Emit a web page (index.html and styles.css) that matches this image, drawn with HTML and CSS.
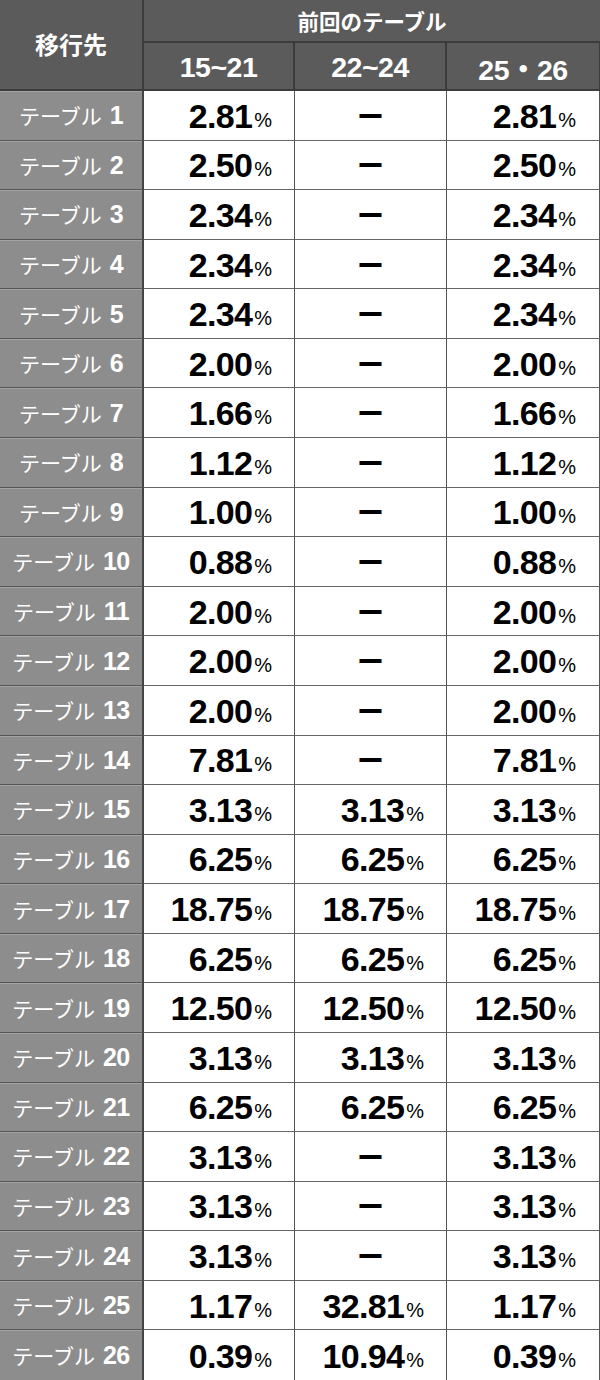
FILE: index.html
```html
<!DOCTYPE html>
<html lang="ja">
<head>
<meta charset="utf-8">
<title>移行先テーブル</title>
<link rel="stylesheet" href="styles.css">
</head>
<body>
<div class="table">
  <div class="hd hd-main">移行先</div>
  <div class="hd hd-group">前回のテーブル</div>
  <div class="hd hd-sub">15~21</div>
  <div class="hd hd-sub">22~24</div>
  <div class="hd hd-sub last">25・26</div>

  <div class="label"><span class="kana">テーブル</span><span class="num">1</span></div>
  <div class="cell c1"><span class="val">2.81</span><span class="pct">%</span></div>
  <div class="cell c2 dash"><span class="bar">ー</span></div>
  <div class="cell c3"><span class="val">2.81</span><span class="pct">%</span></div>

  <div class="label"><span class="kana">テーブル</span><span class="num">2</span></div>
  <div class="cell c1"><span class="val">2.50</span><span class="pct">%</span></div>
  <div class="cell c2 dash"><span class="bar">ー</span></div>
  <div class="cell c3"><span class="val">2.50</span><span class="pct">%</span></div>

  <div class="label"><span class="kana">テーブル</span><span class="num">3</span></div>
  <div class="cell c1"><span class="val">2.34</span><span class="pct">%</span></div>
  <div class="cell c2 dash"><span class="bar">ー</span></div>
  <div class="cell c3"><span class="val">2.34</span><span class="pct">%</span></div>

  <div class="label"><span class="kana">テーブル</span><span class="num">4</span></div>
  <div class="cell c1"><span class="val">2.34</span><span class="pct">%</span></div>
  <div class="cell c2 dash"><span class="bar">ー</span></div>
  <div class="cell c3"><span class="val">2.34</span><span class="pct">%</span></div>

  <div class="label"><span class="kana">テーブル</span><span class="num">5</span></div>
  <div class="cell c1"><span class="val">2.34</span><span class="pct">%</span></div>
  <div class="cell c2 dash"><span class="bar">ー</span></div>
  <div class="cell c3"><span class="val">2.34</span><span class="pct">%</span></div>

  <div class="label"><span class="kana">テーブル</span><span class="num">6</span></div>
  <div class="cell c1"><span class="val">2.00</span><span class="pct">%</span></div>
  <div class="cell c2 dash"><span class="bar">ー</span></div>
  <div class="cell c3"><span class="val">2.00</span><span class="pct">%</span></div>

  <div class="label"><span class="kana">テーブル</span><span class="num">7</span></div>
  <div class="cell c1"><span class="val">1.66</span><span class="pct">%</span></div>
  <div class="cell c2 dash"><span class="bar">ー</span></div>
  <div class="cell c3"><span class="val">1.66</span><span class="pct">%</span></div>

  <div class="label"><span class="kana">テーブル</span><span class="num">8</span></div>
  <div class="cell c1"><span class="val">1.12</span><span class="pct">%</span></div>
  <div class="cell c2 dash"><span class="bar">ー</span></div>
  <div class="cell c3"><span class="val">1.12</span><span class="pct">%</span></div>

  <div class="label"><span class="kana">テーブル</span><span class="num">9</span></div>
  <div class="cell c1"><span class="val">1.00</span><span class="pct">%</span></div>
  <div class="cell c2 dash"><span class="bar">ー</span></div>
  <div class="cell c3"><span class="val">1.00</span><span class="pct">%</span></div>

  <div class="label"><span class="kana">テーブル</span><span class="num">10</span></div>
  <div class="cell c1"><span class="val">0.88</span><span class="pct">%</span></div>
  <div class="cell c2 dash"><span class="bar">ー</span></div>
  <div class="cell c3"><span class="val">0.88</span><span class="pct">%</span></div>

  <div class="label"><span class="kana">テーブル</span><span class="num">11</span></div>
  <div class="cell c1"><span class="val">2.00</span><span class="pct">%</span></div>
  <div class="cell c2 dash"><span class="bar">ー</span></div>
  <div class="cell c3"><span class="val">2.00</span><span class="pct">%</span></div>

  <div class="label"><span class="kana">テーブル</span><span class="num">12</span></div>
  <div class="cell c1"><span class="val">2.00</span><span class="pct">%</span></div>
  <div class="cell c2 dash"><span class="bar">ー</span></div>
  <div class="cell c3"><span class="val">2.00</span><span class="pct">%</span></div>

  <div class="label"><span class="kana">テーブル</span><span class="num">13</span></div>
  <div class="cell c1"><span class="val">2.00</span><span class="pct">%</span></div>
  <div class="cell c2 dash"><span class="bar">ー</span></div>
  <div class="cell c3"><span class="val">2.00</span><span class="pct">%</span></div>

  <div class="label"><span class="kana">テーブル</span><span class="num">14</span></div>
  <div class="cell c1"><span class="val">7.81</span><span class="pct">%</span></div>
  <div class="cell c2 dash"><span class="bar">ー</span></div>
  <div class="cell c3"><span class="val">7.81</span><span class="pct">%</span></div>

  <div class="label"><span class="kana">テーブル</span><span class="num">15</span></div>
  <div class="cell c1"><span class="val">3.13</span><span class="pct">%</span></div>
  <div class="cell c2"><span class="val">3.13</span><span class="pct">%</span></div>
  <div class="cell c3"><span class="val">3.13</span><span class="pct">%</span></div>

  <div class="label"><span class="kana">テーブル</span><span class="num">16</span></div>
  <div class="cell c1"><span class="val">6.25</span><span class="pct">%</span></div>
  <div class="cell c2"><span class="val">6.25</span><span class="pct">%</span></div>
  <div class="cell c3"><span class="val">6.25</span><span class="pct">%</span></div>

  <div class="label"><span class="kana">テーブル</span><span class="num">17</span></div>
  <div class="cell c1"><span class="val">18.75</span><span class="pct">%</span></div>
  <div class="cell c2"><span class="val">18.75</span><span class="pct">%</span></div>
  <div class="cell c3"><span class="val">18.75</span><span class="pct">%</span></div>

  <div class="label"><span class="kana">テーブル</span><span class="num">18</span></div>
  <div class="cell c1"><span class="val">6.25</span><span class="pct">%</span></div>
  <div class="cell c2"><span class="val">6.25</span><span class="pct">%</span></div>
  <div class="cell c3"><span class="val">6.25</span><span class="pct">%</span></div>

  <div class="label"><span class="kana">テーブル</span><span class="num">19</span></div>
  <div class="cell c1"><span class="val">12.50</span><span class="pct">%</span></div>
  <div class="cell c2"><span class="val">12.50</span><span class="pct">%</span></div>
  <div class="cell c3"><span class="val">12.50</span><span class="pct">%</span></div>

  <div class="label"><span class="kana">テーブル</span><span class="num">20</span></div>
  <div class="cell c1"><span class="val">3.13</span><span class="pct">%</span></div>
  <div class="cell c2"><span class="val">3.13</span><span class="pct">%</span></div>
  <div class="cell c3"><span class="val">3.13</span><span class="pct">%</span></div>

  <div class="label"><span class="kana">テーブル</span><span class="num">21</span></div>
  <div class="cell c1"><span class="val">6.25</span><span class="pct">%</span></div>
  <div class="cell c2"><span class="val">6.25</span><span class="pct">%</span></div>
  <div class="cell c3"><span class="val">6.25</span><span class="pct">%</span></div>

  <div class="label"><span class="kana">テーブル</span><span class="num">22</span></div>
  <div class="cell c1"><span class="val">3.13</span><span class="pct">%</span></div>
  <div class="cell c2 dash"><span class="bar">ー</span></div>
  <div class="cell c3"><span class="val">3.13</span><span class="pct">%</span></div>

  <div class="label"><span class="kana">テーブル</span><span class="num">23</span></div>
  <div class="cell c1"><span class="val">3.13</span><span class="pct">%</span></div>
  <div class="cell c2 dash"><span class="bar">ー</span></div>
  <div class="cell c3"><span class="val">3.13</span><span class="pct">%</span></div>

  <div class="label"><span class="kana">テーブル</span><span class="num">24</span></div>
  <div class="cell c1"><span class="val">3.13</span><span class="pct">%</span></div>
  <div class="cell c2 dash"><span class="bar">ー</span></div>
  <div class="cell c3"><span class="val">3.13</span><span class="pct">%</span></div>

  <div class="label"><span class="kana">テーブル</span><span class="num">25</span></div>
  <div class="cell c1"><span class="val">1.17</span><span class="pct">%</span></div>
  <div class="cell c2"><span class="val">32.81</span><span class="pct">%</span></div>
  <div class="cell c3"><span class="val">1.17</span><span class="pct">%</span></div>

  <div class="label last-row"><span class="kana">テーブル</span><span class="num">26</span></div>
  <div class="cell c1 last-row"><span class="val">0.39</span><span class="pct">%</span></div>
  <div class="cell c2 last-row"><span class="val">10.94</span><span class="pct">%</span></div>
  <div class="cell c3 last-row"><span class="val">0.39</span><span class="pct">%</span></div>
</div>
</body>
</html>
```
FILE: styles.css
```css
* { box-sizing: border-box; }
html, body { margin: 0; padding: 0; background: #fff; }
body { width: 600px; height: 1380px; overflow: hidden; }
.table {
  display: grid;
  grid-template-columns: 144px 151px 152px 1fr;
  grid-template-rows: 43px 48px repeat(26, 1fr);
  width: 600px;
  height: 1380px;
  font-family: "Liberation Sans", "Noto Sans CJK JP", sans-serif;
}
.hd {
  background: #5b5b5b;
  color: #fff;
  font-weight: bold;
  display: flex;
  align-items: center;
  justify-content: center;
  border-right: 2px solid #3c3c3c;
  border-bottom: 2px solid #3c3c3c;
}
.hd-main {
  grid-row: 1 / span 2;
  font-family: "Noto Sans CJK JP", sans-serif;
  font-size: 24px;
  padding-bottom: 2px;
}
.hd-group {
  grid-column: 2 / span 3;
  font-family: "Noto Sans CJK JP", sans-serif;
  font-size: 21.5px;
  border-right: 0;
}
.hd-sub {
  font-size: 28.5px;
  letter-spacing: -0.5px;
  padding-top: 2px;
}
.hd-sub.last { border-right: 1px solid #3c3c3c; }
.label {
  background: #8d8d8d;
  color: #fff;
  display: flex;
  align-items: center;
  justify-content: center;
  border-right: 2px solid #444;
  border-bottom: 1px solid #555;
  box-shadow: inset 0 1px 0 #a2a2a2;
  white-space: nowrap;
}
.label .kana {
  font-family: "Noto Sans CJK JP", sans-serif;
  font-size: 21px;
  font-weight: normal;
}
.label .num {
  font-family: "Liberation Sans", sans-serif;
  font-size: 25px;
  font-weight: bold;
  margin-left: 8px;
  letter-spacing: -0.5px;
  padding-top: 1px;
}
.cell {
  background: #fff;
  color: #000;
  display: flex;
  align-items: center;
  justify-content: flex-end;
  border-right: 1px solid #555;
  border-bottom: 1px solid #666;
  white-space: nowrap;
  padding-top: 2px;
}
.cell.c1 { padding-right: 22px; }
.cell.c2 { padding-right: 22px; }
.cell.c3 { padding-right: 23px; }
.cell .val {
  font-size: 34px;
  font-weight: bold;
  letter-spacing: -0.7px;
}
.cell .pct {
  font-size: 20px;
  font-weight: normal;
  margin-left: 2px;
  padding-top: 8px;
}
.cell.dash { justify-content: center; padding-right: 0; padding-top: 0; }
.cell .bar {
  font-family: "Noto Sans CJK JP", sans-serif;
  font-size: 27px;
  font-weight: bold;
  line-height: 1;
}
.last-row { border-bottom: 0; }
```
